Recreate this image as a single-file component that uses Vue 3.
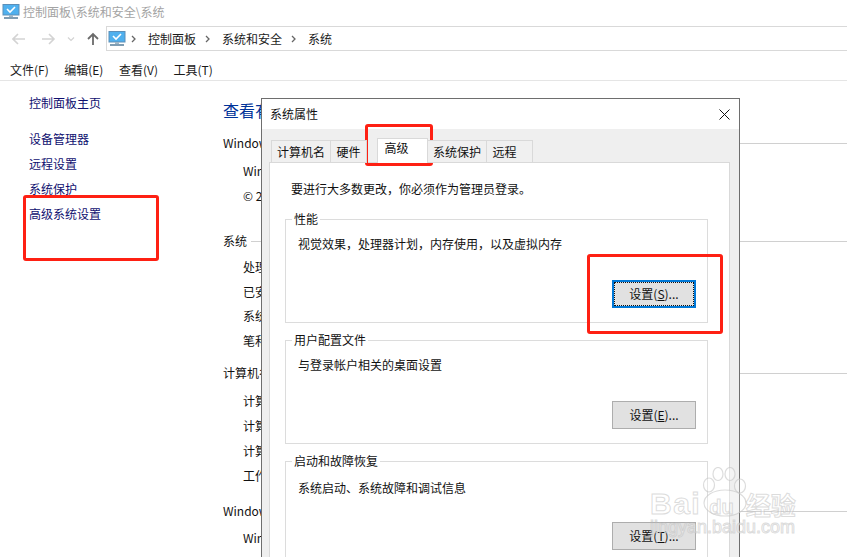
<script setup>
const sideLinks = ['设备管理器', '远程设置', '系统保护', '高级系统设置']
const menus = ['文件(F)', '编辑(E)', '查看(V)', '工具(T)']
const tabs = [
  { label: '计算机名', cls: 't1' },
  { label: '硬件', cls: 't2' },
  { label: '高级', cls: 't3 active' },
  { label: '系统保护', cls: 't4' },
  { label: '远程', cls: 't5' },
]
const sections = [
  { title: 'Windows 版本', cls: 's1', rows: ['Windows 10 专业版', '© 2018 Microsoft Corporation。保留所有权利。'] },
  { title: '系统', cls: 's2', rows: ['处理器：', '已安装的内存(RAM)：', '系统类型：', '笔和触控：'] },
  { title: '计算机名、域和工作组设置', cls: 's3', rows: ['计算机名：', '计算机全名：', '计算机描述：', '工作组：'] },
  { title: 'Windows 激活', cls: 's4', rows: ['Windows 已激活'] },
]
const groups = [
  { legend: '性能', desc: '视觉效果，处理器计划，内存使用，以及虚拟内存', key: 'S', focus: true, cls: '' },
  { legend: '用户配置文件', desc: '与登录帐户相关的桌面设置', key: 'E', focus: false, cls: '' },
  { legend: '启动和故障恢复', desc: '系统启动、系统故障和调试信息', key: 'T', focus: false, cls: 'g3' },
]
</script>

<template>
  <div class="page">
    <header class="titlebar">
      <svg class="pc" width="18" height="16" viewBox="0 0 18 16">
        <rect x="1" y="0.5" width="16" height="10.5" fill="#4fb0ee" stroke="#5c8fb8" />
        <path d="M5 5l3 3 5-5" fill="none" stroke="#fff" stroke-width="1.6" />
        <rect x="7" y="11" width="4" height="2" fill="#9fb6c6" />
        <rect x="2" y="13" width="14" height="2" fill="#7f9db3" />
      </svg>
      <span>控制面板\系统和安全\系统</span>
    </header>

    <nav class="navbar">
      <svg class="nav-icons" width="92" height="16" viewBox="0 0 92 16">
        <path d="M1 8h12M6 3L1 8l5 5" fill="none" stroke="#d3d3d3" stroke-width="1.6" />
        <path d="M30 8h12M37 3l5 5-5 5" fill="none" stroke="#d3d3d3" stroke-width="1.6" />
        <path d="M56 6.500l3 3 3-3" fill="none" stroke="#d3d3d3" stroke-width="1.2" />
        <path d="M81 14V3M76 8l5-5 5 5" fill="none" stroke="#6b6b6b" stroke-width="1.800" />
      </svg>
      <div class="address">
        <svg width="18" height="16" viewBox="0 0 18 16">
          <rect x="1" y="0.500" width="16" height="10.500" fill="#4fb0ee" stroke="#5c8fb8" />
          <path d="M5 5l3 3 5-5" fill="none" stroke="#fff" stroke-width="1.600" />
          <rect x="7" y="11" width="4" height="2" fill="#9fb6c6" />
          <rect x="2" y="13" width="14" height="2" fill="#7f9db3" />
        </svg>
        <svg class="chev first" width="6" height="8" viewBox="0 0 6 8"><path d="M1 1l3 3-3 3" fill="none" stroke="#666" stroke-width="1.300" /></svg>
        <span>控制面板</span>
        <svg class="chev" width="6" height="8" viewBox="0 0 6 8"><path d="M1 1l3 3-3 3" fill="none" stroke="#666" stroke-width="1.300" /></svg>
        <span>系统和安全</span>
        <svg class="chev" width="6" height="8" viewBox="0 0 6 8"><path d="M1 1l3 3-3 3" fill="none" stroke="#666" stroke-width="1.300" /></svg>
        <span>系统</span>
      </div>
    </nav>

    <div class="menubar">
      <span v-for="m in menus" :key="m">{{ m }}</span>
    </div>

    <main class="main">
      <aside class="sidebar">
        <a class="home">控制面板主页</a>
        <a v-for="l in sideLinks" :key="l">{{ l }}</a>
      </aside>
      <section class="content">
        <h1>查看有关计算机的基本信息</h1>
        <div v-for="s in sections" :key="s.title" class="sec" :class="s.cls">
          <div class="sec-head"><span>{{ s.title }}</span><i></i></div>
          <div v-for="r in s.rows" :key="r" class="row">{{ r }}</div>
        </div>
      </section>
    </main>

    <div class="dialog">
      <div class="dlg-title">
        <span>系统属性</span>
        <svg width="11" height="11" viewBox="0 0 11 11"><path d="M0.500 0.500l10 10M10.500 0.500l-10 10" stroke="#111" stroke-width="1" fill="none" /></svg>
      </div>
      <div class="dlg-body">
        <div class="tabs">
          <span v-for="t in tabs" :key="t.label" class="tab" :class="t.cls">{{ t.label }}</span>
        </div>
        <div class="pane">
          <p class="notice">要进行大多数更改，你必须作为管理员登录。</p>
          <div v-for="g in groups" :key="g.key" class="group" :class="g.cls">
            <span class="legend">{{ g.legend }}</span>
            <p class="desc">{{ g.desc }}</p>
            <button class="btn" :class="{ focus: g.focus }">
              <span class="btn-in">设置(<u>{{ g.key }}</u>)...</span>
            </button>
          </div>
        </div>
      </div>
    </div>

    <div class="mark m1"></div>
    <div class="mark m2"></div>
    <div class="mark m3"></div>

    <div class="wm">
      <svg class="paw" width="48" height="52" viewBox="0 0 48 52">
        <g fill="#fff" fill-opacity=".3" stroke="#c4c4c4" stroke-opacity=".6" stroke-width="1.200">
          <ellipse cx="8" cy="18" rx="5.500" ry="7" />
          <ellipse cx="17" cy="7" rx="5" ry="6.500" />
          <ellipse cx="29" cy="7" rx="5" ry="6.500" />
          <ellipse cx="39" cy="19" rx="5.500" ry="7" />
          <ellipse cx="24" cy="36" rx="21" ry="13" />
        </g>
      </svg>
      <div class="wm-main"><span class="bai">Bai</span><span class="du">du</span><span class="jy">经验</span></div>
      <div class="wm-sub">jingyan.baidu.com</div>
    </div>
  </div>
</template>

<style scoped>
.page {
  position: relative;
  width: 847px;
  height: 557px;
  overflow: hidden;
  background: #fff;
  color: #111;
  font: 12px/16px "Noto Sans CJK SC", "Liberation Sans", sans-serif;
}
.titlebar {
  height: 24px;
  display: flex;
  align-items: center;
  padding-left: 2px;
  gap: 3px;
  color: #a3a3a3;
}
.navbar {
  height: 28px;
  display: flex;
  align-items: center;
  padding-left: 12px;
  padding-top: 2px;
  padding-bottom: 1px;
  box-sizing: border-box;
}
.nav-icons { margin-right: 2px; }
.address {
  flex: 1;
  height: 23px;
  margin-right: -4px;
  border: 1px solid #d9d9d9;
  display: flex;
  align-items: center;
  padding-left: 1px;
  color: #1a1a1a;
}
.chev { margin: 0 11px 0 9px; }
.chev.first { margin: 0 11px 0 5px; }
.menubar {
  height: 29px;
  box-sizing: border-box;
  border-bottom: 1px solid #e5e5e5;
  display: flex;
  align-items: center;
  padding-left: 10px;
  padding-top: 7px;
  gap: 15.500px;
  color: #1a1a1a;
}
.main {
  display: flex;
}
.sidebar {
  width: 194px;
  padding: 14px 0 0 29px;
  box-sizing: content-box;
  display: flex;
  flex-direction: column;
  color: #101070;
}
.sidebar a { height: 25px; line-height: 16px; }
.sidebar .home { height: 36px; }
.content { flex: 1; padding-top: 19px; }
h1 {
  margin: 0 0 14px;
  font-size: 16px;
  line-height: 21px;
  font-weight: 400;
  color: #003399;
}
.sec-head {
  display: flex;
  align-items: center;
  height: 16px;
  gap: 4px;
  white-space: nowrap;
  margin-bottom: 7px;
}
.sec-head i { flex: 1; height: 1px; background: #d0d0d0; }
.row { padding-left: 20px; height: 24.500px; white-space: nowrap; line-height: 16px; display: flex; align-items: center; }
.s1 .sec-head { margin-bottom: 8px; }
.s2 { margin-top: 25px; }
.s2 .sec-head { margin-bottom: 6px; }
.s3 { margin-top: 12px; }
.s3 .row { height: 25px; }
.s4 { margin-top: 15px; }

.dialog {
  position: absolute;
  left: 261px;
  top: 98px;
  width: 479px;
  height: 480px;
  box-sizing: border-box;
  border: 1px solid #6e6e6e;
  background: #fff;
  display: flex;
  flex-direction: column;
}
.dlg-title {
  height: 30px;
  flex: none;
  display: flex;
  align-items: center;
  justify-content: space-between;
  padding: 0 9px 0 8px;
}
.dlg-body {
  flex: 1;
  background: #efefef;
  padding: 11px 9px 0 7px;
  display: flex;
  flex-direction: column;
}
.tabs { display: flex; height: 22px; padding-left: 2px; position: relative; z-index: 1; }
.tab {
  box-sizing: border-box;
  height: 23px;
  border: 1px solid #d9d9d9;
  border-left: 0;
  text-align: center;
  line-height: 22px;
  background: #f0f0f0;
}
.t1 { width: 60px; border-left: 1px solid #d9d9d9; }
.t2 { width: 36px; }
.t3 { width: 51px; margin-left: 10px; padding-right: 12px; }
.t4 { width: 59px; }
.t5 { width: 46px; padding-right: 10px; }
.tab.active {
  background: #fff;
  height: 25px;
  margin-top: -2px;
  line-height: 18px;
  border-left: 1px solid #d9d9d9;
  border-bottom: 0;
}
.pane {
  flex: 1;
  background: #fff;
  border: 1px solid #d9d9d9;
  padding: 18px 21px 0 15px;
}
.notice { margin: 0 0 22px 6px; }
.group {
  position: relative;
  height: 104px;
  box-sizing: border-box;
  margin-bottom: 17px;
  border: 1px solid #dcdcdc;
  padding: 16px 11px 0 12px;
}
.g3 { padding-top: 18px; }
.g3 .btn { margin-top: 26px; }
.legend {
  position: absolute;
  left: 6px;
  top: -9px;
  padding: 0 2px;
  background: #fff;
}
.desc { margin: 0; }
.btn {
  display: block;
  margin: 28px 0 0 auto;
  width: 84px;
  height: 28px;
  box-sizing: border-box;
  border: 1px solid #adadad;
  background: #e1e1e1;
  padding: 0;
  font: inherit;
  color: #111;
}
.btn.focus { border: 2px solid #0078d7; }
.btn-in {
  display: flex;
  height: 100%;
  align-items: center;
  justify-content: center;
  box-sizing: border-box;
}
.btn.focus .btn-in { border: 1px dotted #111; }

.mark {
  position: absolute;
  box-sizing: border-box;
  border: 3px solid #fe2013;
  border-radius: 3px;
}
.m1 { left: 23px; top: 195px; width: 136px; height: 66px; }
.m2 { left: 365px; top: 124px; width: 68px; height: 42px; }
.m3 { left: 587px; top: 254px; width: 136px; height: 80px; }

.wm {
  position: absolute;
  left: 648px;
  top: 466px;
  width: 160px;
  height: 80px;
  font-family: "Liberation Sans", sans-serif;
  font-weight: 700;
  color: rgba(255, 255, 255, .35);
  -webkit-text-stroke: 1px rgba(190, 190, 190, .55);
}
.paw { position: absolute; left: 53px; top: 1px; }
.wm-main {
  position: absolute;
  left: 2px;
  top: 20px;
  line-height: 30px;
  white-space: nowrap;
  display: flex;
  align-items: center;
}
.bai { font-size: 30px; letter-spacing: 1.500px; }
.du { font-size: 20px; margin-left: 8px; margin-top: 6px; }
.jy {
  font-family: "Noto Sans CJK SC", sans-serif;
  font-size: 25px;
  margin-left: 12px;
}
.wm-sub {
  position: absolute;
  left: 2px;
  top: 52px;
  font-size: 18px;
  line-height: 18px;
  font-weight: 400;
  white-space: nowrap;
}
</style>
